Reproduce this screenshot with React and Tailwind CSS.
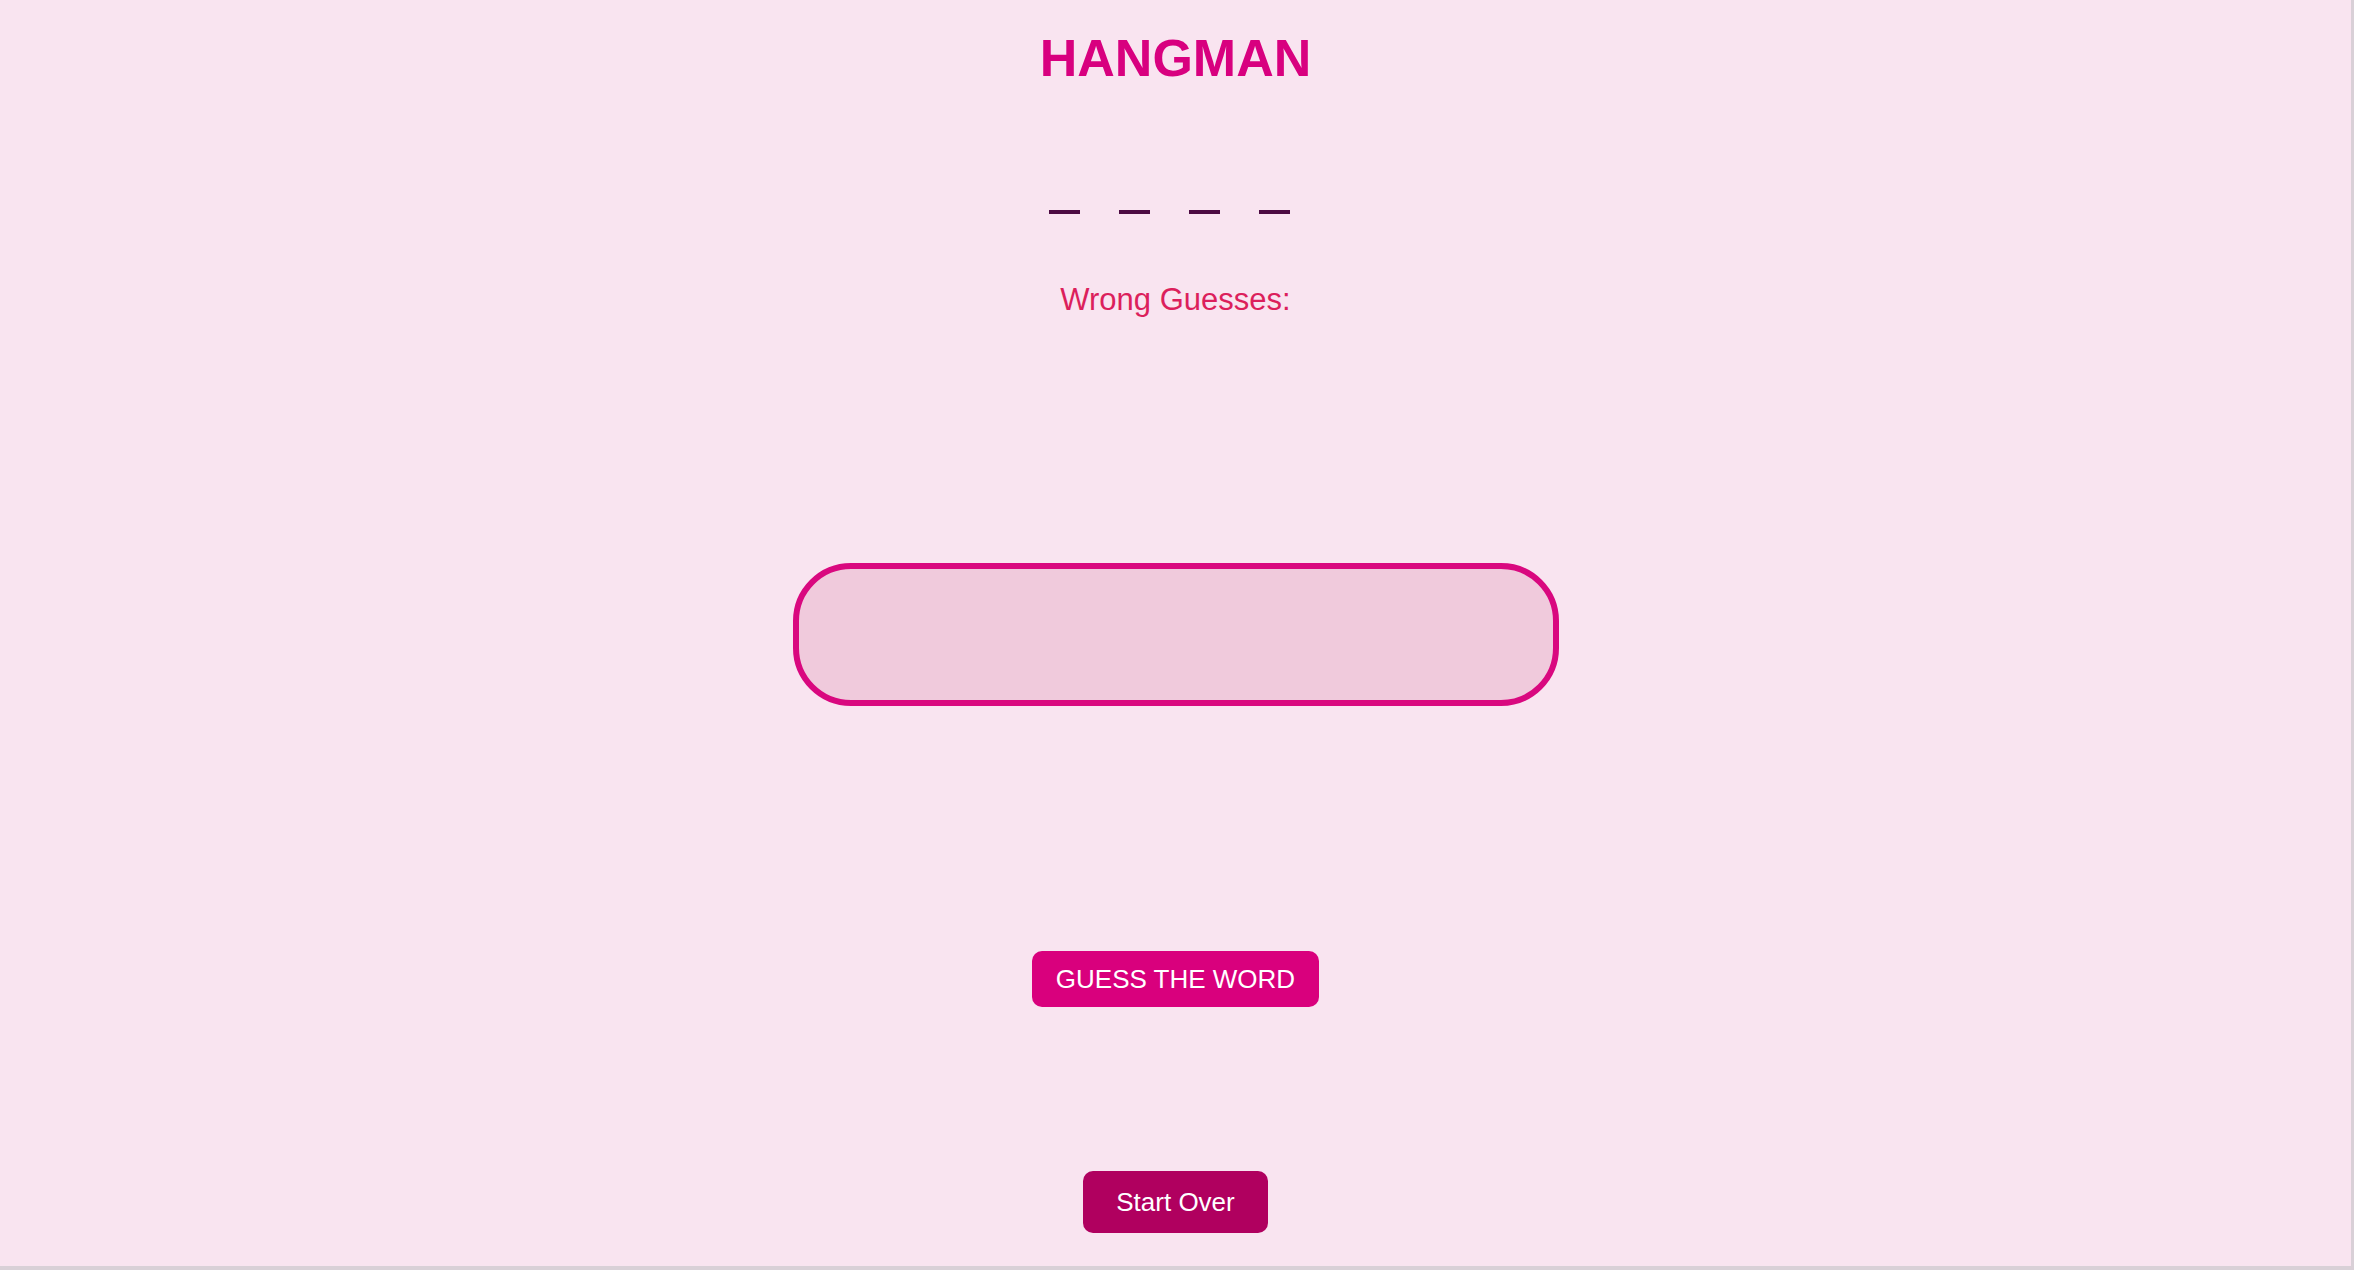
import React, { useState } from 'react';

export default function App() {
  const [guess, setGuess] = useState('');
  const blanks = ['', '', '', ''];

  return (
    <div
      className="w-full h-[1270px] bg-[#f9e4f0] border-r-[3px] border-b-[4px] border-[#d9d0d7] flex flex-col items-center"
      style={{ fontFamily: '"Liberation Sans", Arial, sans-serif' }}
    >
      {/* Title */}
      <h1 className="mt-[32px] text-[52px] leading-none font-bold text-[#d8007f]">HANGMAN</h1>

      {/* Word blanks */}
      <div className="mt-[126px] pr-[13px] flex gap-[39px]">
        {blanks.map((_, i) => (
          <span key={i} className="block w-[31px] h-[4px] bg-[#4d0b42]"></span>
        ))}
      </div>

      <p className="mt-[70px] text-[31px] leading-none text-[#dc1f5c]">Wrong Guesses:</p>

      {/* Guess input */}
      <input
        type="text"
        value={guess}
        onChange={(e) => setGuess(e.target.value)}
        className="mt-[248px] w-[766px] h-[143px] border-[6px] border-[#d9087f] rounded-[58px] bg-[#f0cadc] outline-none px-[40px] text-[32px] text-[#4d0b42]"
      />

      <button className="mt-[245px] h-[56px] px-[24px] rounded-[10px] bg-[#d9007d] text-white text-[26px] leading-none">
        GUESS THE WORD
      </button>

      <button className="mt-[164px] h-[62px] px-[33px] rounded-[10px] bg-[#b0005f] text-white text-[26px] leading-none">
        Start Over
      </button>
    </div>
  );
}
